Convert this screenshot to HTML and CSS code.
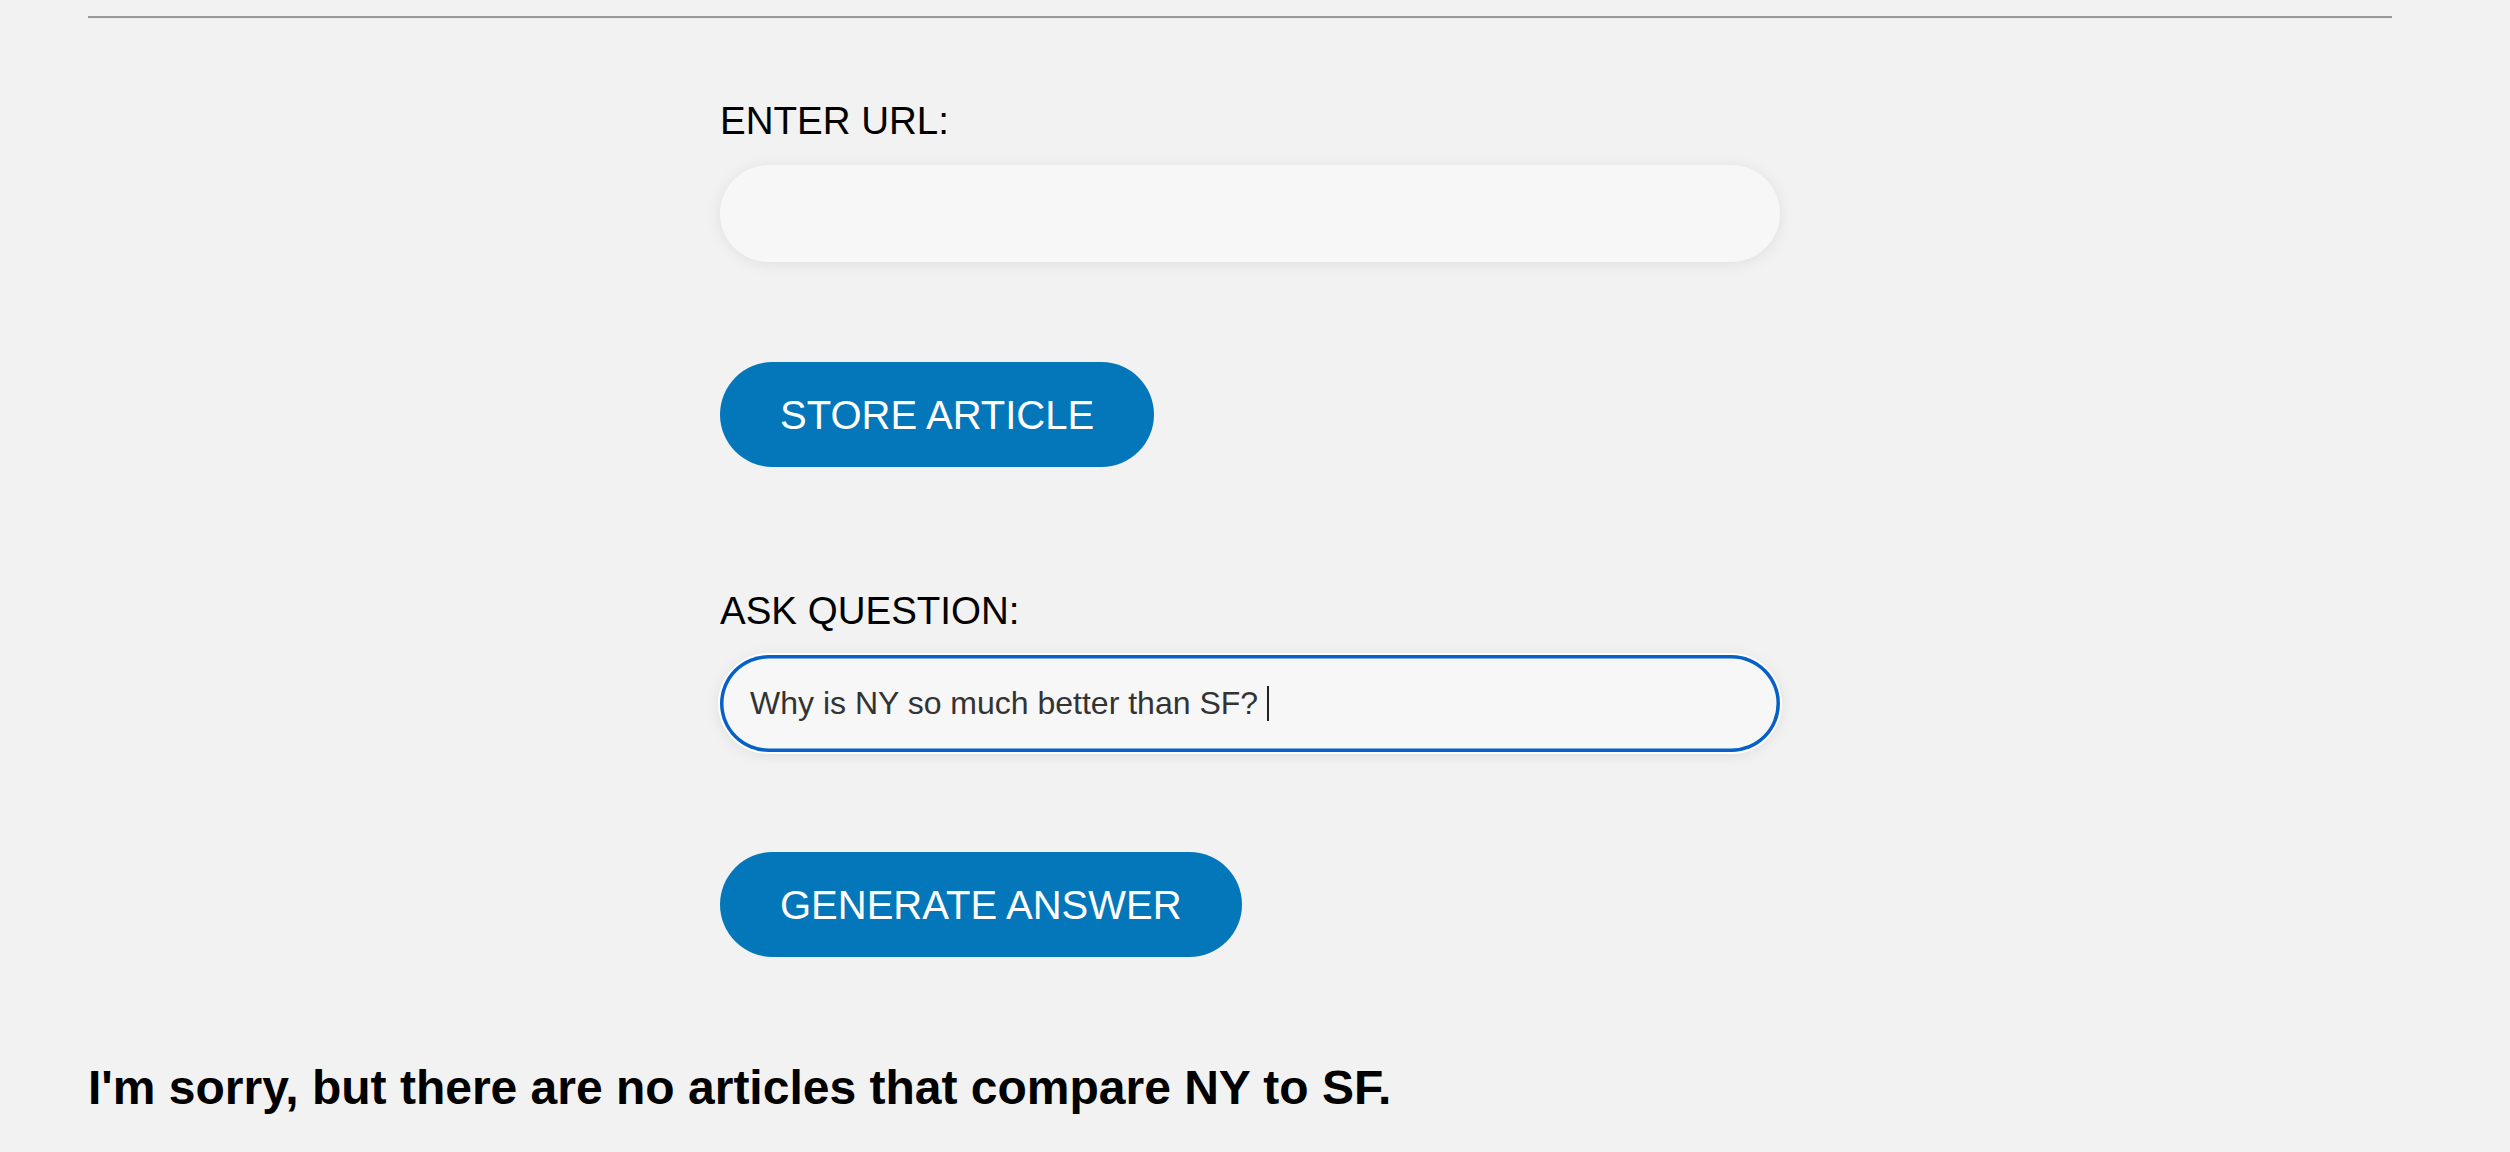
FILE: index.html
```html
<!DOCTYPE html>
<html lang="en">
<head>
<meta charset="utf-8">
<title>Article Q&amp;A</title>
<link rel="stylesheet" href="styles.css">
</head>
<body>
<div class="page">
  <hr class="rule">
  <div class="form">
    <label class="label" for="url">ENTER URL:</label>
    <input class="field" id="url" type="text">
    <button class="btn" type="button">STORE ARTICLE</button>
    <label class="label label-second">ASK QUESTION:</label>
    <div class="field field-focus"><span class="field-text">Why is NY so much better than SF? </span><span class="caret"></span></div>
    <button class="btn" type="button">GENERATE ANSWER</button>
  </div>
  <h2 class="answer">I'm sorry, but there are no articles that compare NY to SF.</h2>
</div>
</body>
</html>
```
FILE: styles.css
```css
html, body {
  margin: 0;
  padding: 0;
  background: #f2f2f2;
}
body {
  font-family: "Liberation Sans", Arial, Helvetica, sans-serif;
  color: #000;
}
.page {
  padding: 16px 118px 0 88px;
}
.rule {
  margin: 0;
  height: 0;
  border: none;
  border-top: 2px solid #999999;
  border-bottom: 1px solid #ececec;
}
.form {
  display: flex;
  flex-direction: column;
  align-items: flex-start;
  margin-left: 632px;
  width: 1060px;
}
.label {
  display: block;
  margin-top: 79px;
  font-size: 38.5px;
  line-height: 46px;
  color: #000;
}
.label-second {
  margin-top: 121px;
}
.field {
  box-sizing: border-box;
  display: flex;
  align-items: center;
  width: 1060px;
  height: 97px;
  margin-top: 21px;
  padding: 0 30px;
  border: none;
  border-radius: 49px;
  background: #f7f7f7;
  box-shadow: 0 2px 16px rgba(0, 0, 0, 0.08);
  font-family: "Liberation Sans", Arial, Helvetica, sans-serif;
  font-size: 32px;
  color: #333;
  outline: none;
}
.field-focus {
  box-shadow: inset 0 0 0 3.5px #0560c7, 0 0 0 2px #ffffff, 0 2px 16px rgba(0, 0, 0, 0.1);
}
.field-text {
  white-space: pre;
}
.caret {
  display: inline-block;
  width: 2px;
  height: 35px;
  background: #222;
}
.btn {
  margin-top: 100px;
  height: 105px;
  padding: 0 60px;
  border: none;
  border-radius: 53px;
  background: #0377b9;
  color: #fff;
  font-family: "Liberation Sans", Arial, Helvetica, sans-serif;
  font-size: 40px;
  line-height: 46px;
  cursor: pointer;
}
.answer {
  margin: 104px 0 0 0;
  font-size: 48px;
  line-height: 54px;
  font-weight: bold;
  color: #000;
}
```
